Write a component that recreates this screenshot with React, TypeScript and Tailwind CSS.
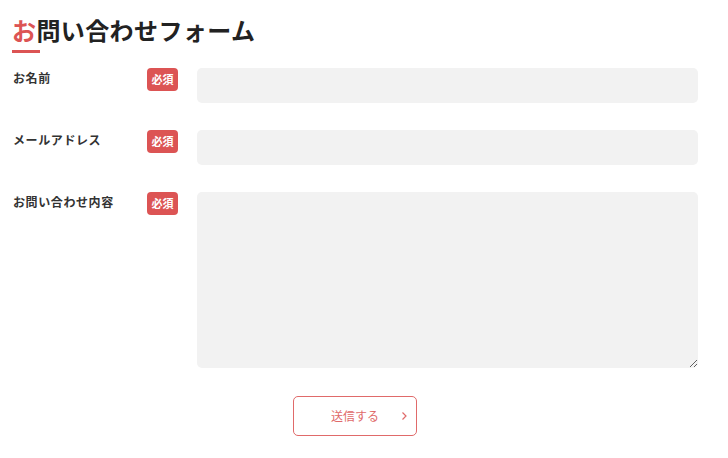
import React from "react";

const font = { fontFamily: '"Noto Sans CJK JP", "Noto Sans", sans-serif' };

interface Field {
    label: string;
    multiline?: boolean;
}

const fields: Field[] = [
    { label: "お名前" },
    { label: "メールアドレス" },
    { label: "お問い合わせ内容", multiline: true },
];

function FormRow({ label, multiline }: Field) {
    return (
        <div className="flex items-start">
            <div className="w-[135px] pt-[1px] pl-[1px] text-[12px] font-bold leading-[18px] tracking-[0.6px] text-[#333333]">
                {label}
            </div>
            <span className="flex h-[23px] w-[31px] items-center justify-center rounded-[4px] bg-[#dc5454] text-[11px] font-bold text-white">
                必須
            </span>
            <div className="ml-[19px] flex-1">
                {multiline ? (
                    <textarea className="block h-[176px] w-full rounded-[5px] bg-[#f2f2f2] outline-none" />
                ) : (
                    <input type="text" className="block h-[35px] w-full rounded-[5px] bg-[#f2f2f2] outline-none" />
                )}
            </div>
        </div>
    );
}

export default function App() {
    return (
        <div className="min-h-screen bg-white" style={font}>
            <div className="ml-[12px] w-[686px] pt-[13px]">
                <h1 className="text-[24px] font-bold leading-[34px] tracking-[0.4px] text-[#222222]">
                    <span className="text-[#dc5454]">お</span>問い合わせフォーム
                </h1>
                <div className="mt-[3px] h-[3px] w-[28px] bg-[#dc5454]" />

                <div className="mt-[15px] flex flex-col gap-[27px]">
                    {fields.map((f) => (
                        <FormRow key={f.label} {...f} />
                    ))}
                </div>

                <div className="mt-[28px] flex justify-center">
                    <button className="relative flex h-[40px] w-[124px] items-center justify-center rounded-[5px] border border-[#e06a6a] text-[12px] text-[#e06a6a]">
                        送信する
                        <svg
                            className="absolute right-[8px] top-1/2 -translate-y-1/2"
                            width="7"
                            height="10"
                            viewBox="0 0 7 10"
                            fill="none"
                        >
                            <path d="M1.5 1.5 L5 5 L1.5 8.5" stroke="#e06a6a" strokeWidth="1.2" />
                        </svg>
                    </button>
                </div>
            </div>
        </div>
    );
}
